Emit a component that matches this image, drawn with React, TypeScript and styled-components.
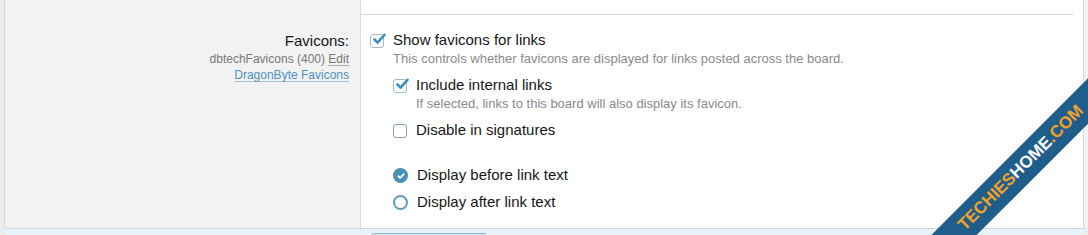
import React from "react";
import styled, { createGlobalStyle } from "styled-components";

const GlobalStyle = createGlobalStyle`
  html, body { margin: 0; padding: 0; background: #ffffff; }
  body { font-family: "Liberation Sans", Arial, Helvetica, sans-serif; }
  * { box-sizing: border-box; }
`;

const Page = styled.div`
  position: relative;
  width: 1088px;
  height: 235px;
  overflow: hidden;
  display: flex;
  flex-direction: column;
  background: #ebebeb;
`;

const MainRow = styled.div`
  display: flex;
  height: 228px;
`;

const LeftEdge = styled.div`
  width: 5px;
  background: #ebebeb;
  border-right: 1px solid #d6d6d6;
`;

const LabelCol = styled.div`
  width: 356px;
  background: #f2f2f2;
  border-right: 1px solid #dcdcdc;
  padding: 32px 11px 0 0;
  display: flex;
  flex-direction: column;
  align-items: flex-end;
  text-align: right;
`;

const LabelTitle = styled.div`
  font-size: 15px;
  line-height: 18px;
  color: #161616;
`;

const LabelMeta = styled.div<{ $first?: boolean }>`
  font-size: 12px;
  line-height: 16px;
  color: #777;
  margin-top: ${(p) => (p.$first ? "1px" : "0")};
`;

const MetaLink = styled.a<{ $blue?: boolean }>`
  color: ${(p) => (p.$blue ? "#4a93c0" : "#777")};
  text-decoration: underline;
  text-decoration-color: ${(p) => (p.$blue ? "#9cc3da" : "#aaa")};
  text-underline-offset: 2px;
`;

const Content = styled.div`
  flex: 1;
  background: #ffffff;
  display: flex;
  flex-direction: column;
`;

const TopStrip = styled.div`
  height: 15px;
  border-bottom: 1px solid #d9d9d9;
  margin-right: 10px;
`;

const Options = styled.div`
  padding: 16px 0 0 9px;
  display: flex;
  flex-direction: column;
`;

const OptionRow = styled.label<{ $indent?: boolean; $gap?: number }>`
  display: flex;
  align-items: center;
  gap: 9px;
  margin-left: ${(p) => (p.$indent ? "23px" : "0")};
  margin-top: ${(p) => p.$gap ?? 0}px;
  font-size: 15px;
  line-height: 18px;
  color: #161616;
`;

const Hint = styled.div<{ $indent?: boolean }>`
  font-size: 13px;
  line-height: 16px;
  color: #8a8a8a;
  margin-top: 2px;
  margin-left: ${(p) => (p.$indent ? "46px" : "23px")};
`;

const Box = styled.span<{ $checked?: boolean }>`
  position: relative;
  width: 14px;
  height: 14px;
  flex: none;
  border: 1.5px solid ${(p) => (p.$checked ? "#9dbccb" : "#7ea4b3")};
  border-radius: 3px;
  background: #fff;
  margin-top: 2px;
  svg {
    position: absolute;
    left: 1px;
    top: -3px;
  }
`;

const Radio = styled.span<{ $checked?: boolean }>`
  width: 15px;
  height: 15px;
  flex: none;
  border-radius: 50%;
  display: flex;
  align-items: center;
  justify-content: center;
  background: ${(p) => (p.$checked ? "#4790b6" : "#fff")};
  border: ${(p) => (p.$checked ? "none" : "2px solid #5f9bb8")};
  margin-top: 1px;
`;

const RightEdge = styled.div`
  width: 5px;
  background: #f2f2f2;
  border-left: 1px solid #dadada;
`;

const Footer = styled.div`
  height: 7px;
  margin-left: 5px;
  margin-right: 4px;
  background: #e8f3fa;
  border-top: 1px solid #c7d6df;
  padding: 4px 0 0 366px;
`;

const FooterButton = styled.div`
  width: 116px;
  height: 6px;
  border-top: 1px solid #8fb9d1;
  background: #d6e9f5;
  border-radius: 3px 3px 0 0;
`;

const Ribbon = styled.div`
  position: absolute;
  left: 871px;
  top: 152px;
  width: 300px;
  height: 32px;
  background: #1f5d8b;
  transform: rotate(-45deg);
  display: flex;
  align-items: center;
  justify-content: center;
  font-family: "Liberation Sans", Arial, sans-serif;
  font-weight: 700;
  font-size: 17px;
  white-space: nowrap;
`;

const RibbonPart = styled.span<{ $white?: boolean }>`
  color: ${(p) => (p.$white ? "#ffffff" : "#f2a229")};
`;

const CheckMark = () => (
  <svg width="14" height="14" viewBox="0 0 14 14">
    <path
      d="M2.5 7.5 L5.6 10.6 L12.5 2.8"
      fill="none"
      stroke="#3f8fbf"
      strokeWidth="2.6"
      strokeLinecap="round"
      strokeLinejoin="round"
    />
  </svg>
);

const RadioCheck = () => (
  <svg width="10" height="10" viewBox="0 0 10 10">
    <path
      d="M2.3 5.2 L4.2 7 L7.8 3.2"
      fill="none"
      stroke="#ffffff"
      strokeWidth="1.8"
      strokeLinecap="round"
      strokeLinejoin="round"
    />
  </svg>
);

export default function App() {
  return (
    <>
      <GlobalStyle />
      <Page>
        <MainRow>
          <LeftEdge />
          <LabelCol>
            <LabelTitle>Favicons:</LabelTitle>
            <LabelMeta $first>
              dbtechFavicons (400) <MetaLink>Edit</MetaLink>
            </LabelMeta>
            <LabelMeta>
              <MetaLink $blue>DragonByte Favicons</MetaLink>
            </LabelMeta>
          </LabelCol>
          <Content>
            <TopStrip />
            <Options>
              <OptionRow>
                <Box $checked>
                  <CheckMark />
                </Box>
                Show favicons for links
              </OptionRow>
              <Hint>
                This controls whether favicons are displayed for links posted across the board.
              </Hint>
              <OptionRow $indent $gap={9}>
                <Box $checked>
                  <CheckMark />
                </Box>
                Include internal links
              </OptionRow>
              <Hint $indent>If selected, links to this board will also display its favicon.</Hint>
              <OptionRow $indent $gap={9}>
                <Box />
                Disable in signatures
              </OptionRow>
              <OptionRow $indent $gap={27}>
                <Radio $checked>
                  <RadioCheck />
                </Radio>
                Display before link text
              </OptionRow>
              <OptionRow $indent $gap={9}>
                <Radio />
                Display after link text
              </OptionRow>
            </Options>
          </Content>
          <RightEdge />
        </MainRow>
        <Footer>
          <FooterButton />
        </Footer>
        <Ribbon>
          <RibbonPart>TECHIES</RibbonPart>
          <RibbonPart $white>HOME</RibbonPart>
          <RibbonPart>.COM</RibbonPart>
        </Ribbon>
      </Page>
    </>
  );
}
